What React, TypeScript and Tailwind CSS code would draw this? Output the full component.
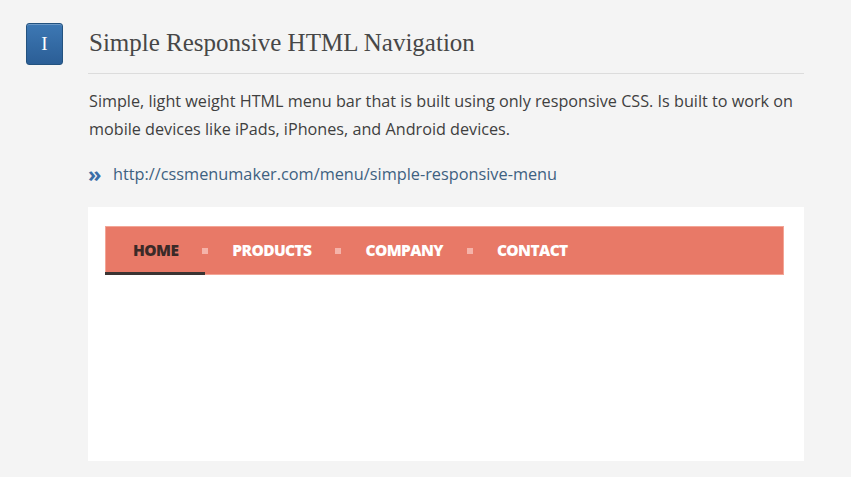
import React from "react";

const menuItems = ["Home", "Products", "Company", "Contact"];

export default function App() {
  return (
    <div className="min-h-[477px] w-full bg-[#f4f4f4] font-['Open_Sans',sans-serif]">
      <div className="flex">
        {/* numbered badge */}
        <div className="w-[88px] pl-[26px] pt-[23px] shrink-0">
          <div className="w-[37px] h-[42px] rounded-[3px] border border-[#23527f] bg-gradient-to-b from-[#3d78b4] to-[#2b5e96] flex items-center justify-center text-white text-[19px] font-['Liberation_Serif',serif] shadow-[inset_0_1px_0_rgba(255,255,255,0.25)]">
            I
          </div>
        </div>

        <div className="w-[716px]">
          <h2 className="mt-[25px] pb-[12px] pl-px border-b border-[#dcdcdc] leading-[36px] text-[25px] text-[#474747] font-['Liberation_Serif',serif]">
            Simple Responsive HTML Navigation
          </h2>

          <p className="mt-[13px] pl-px text-[16.2px] leading-[28px] text-[#3f3f3f]">
            Simple, light weight HTML menu bar that is built using only responsive CSS. Is built to work on
            mobile devices like iPads, iPhones, and Android devices.
          </p>

          <div className="mt-[17px] flex items-center leading-[28px]">
            <span className="w-[25px] text-[22px] font-bold text-[#3a6ea8] leading-[28px] -mt-[3px]">»</span>
            <a href="#" className="text-[16.3px] text-[#3e6181]">
              http://cssmenumaker.com/menu/simple-responsive-menu
            </a>
          </div>

          {/* preview */}
          <div className="mt-[19px] h-[254px] bg-white pt-[19px] pl-[17px] pr-[20px]">
            <nav className="h-[49px] bg-[#e87967] border border-[#f3a596] flex">
              {menuItems.map((item, i) => (
                <div key={item} className="relative flex items-center">
                  <span
                    className={
                      "px-[27px] h-full flex items-center text-[15.5px] font-extrabold uppercase tracking-[-0.6px] " +
                      (i === 0 ? "text-[#3b2a28]" : "text-white")
                    }
                  >
                    {item}
                  </span>
                  {i === 0 && (
                    <span className="absolute left-[-1px] right-0 bottom-[-1px] h-[3px] bg-[#3a3433]" />
                  )}
                  {i < menuItems.length - 1 && (
                    <span className="absolute right-[-3px] top-1/2 -translate-y-1/2 w-[6px] h-[6px] bg-[#f5b3a9]" />
                  )}
                </div>
              ))}
            </nav>
          </div>
        </div>
      </div>
    </div>
  );
}
